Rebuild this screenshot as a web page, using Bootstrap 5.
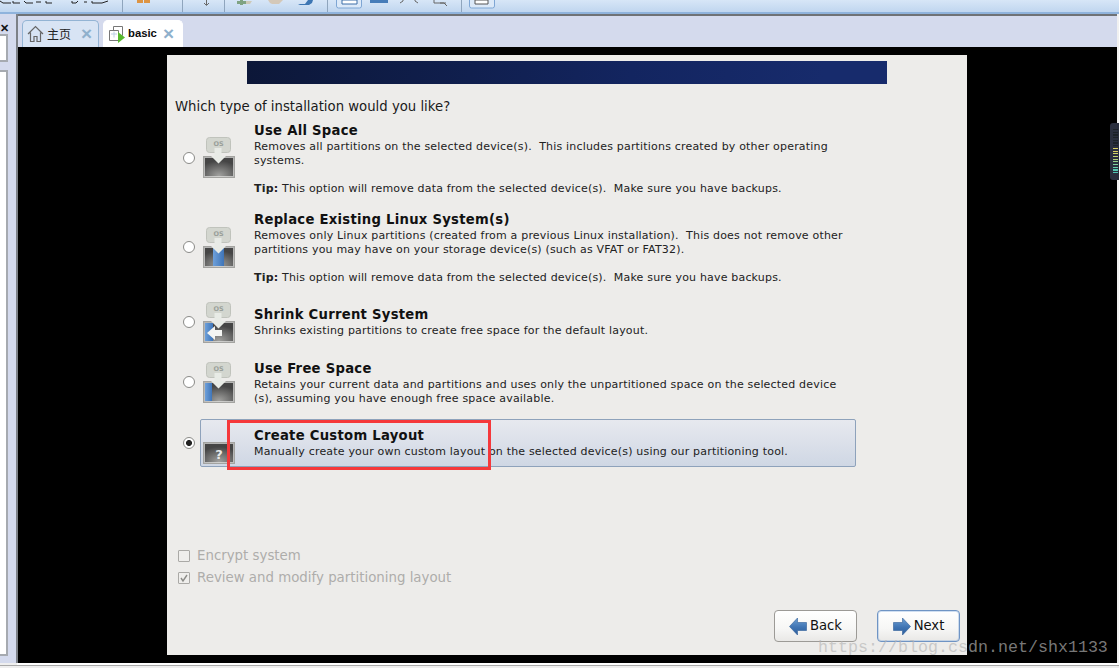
<!doctype html>
<html lang="en"><head><meta charset="utf-8"><title>Installer</title>
<link href="https://cdn.jsdelivr.net/npm/bootstrap@5.3.0/dist/css/bootstrap.min.css" rel="stylesheet">
<style>
body{width:1119px;height:668px;overflow:hidden;background:#efefef;font-family:"DejaVu Sans",sans-serif;position:relative}
.topbar{height:14px;background:linear-gradient(#d7e6f7,#c0d6ef);border-bottom:2px solid #8fb3dc;overflow:hidden}
.topbar svg{display:block}
.shell{height:649px}
.leftrail{width:18px;background:#d4daed;border-right:2px solid #7d8187;padding-top:3px}
.xmark{font:700 11px/14px "Liberation Sans",sans-serif;color:#111;height:18px;padding-top:4px;margin-bottom:-1px}
.railbox{background:#fff;border:2px solid #a6aab0;border-left:0;width:8px}
.rb1{height:28px}.rb2{height:586px;margin-top:8px}
.main{width:1101px;border-right:2px solid #f1f1f1}
.tabstrip{height:33px;background:#d4daed;border-top:2px solid #6f7275;padding:4px 0 0 4px;gap:4px}
.tabitem{height:27px;border:1px solid #93b4d4;border-bottom:0;border-radius:5px 5px 0 0;background:#d8e4f4;font:12px/25px "Noto Sans CJK SC",sans-serif;color:#222;padding-left:4px;gap:3px}
.tabitem.on{background:#fff;border-color:#fff;font:700 11.3px/25px "Liberation Sans",sans-serif;color:#0c0c0c}
.t1{width:77px}.t2{width:80px}
.tabx{color:#8fb0cc;font:700 19px/25px "Liberation Sans",sans-serif;width:11px;text-align:center}
.t1 .tabx{margin-right:6px!important}
.screen{height:616px;background:#000;padding:8px 0 0 149px}
.install{width:800px;height:600px;background:#edecea;color:#111;padding-top:6px}
.banner{width:640px;height:23px;margin-left:80px;background:linear-gradient(95deg,#0c1738,#101f4e 35%,#132560 60%,#172b6c 90%)}
.question{font-size:13.25px;line-height:17px;margin:14px 0 0 8px;color:#1a1a1a}
.optlist{margin-left:8px;width:681px}
.opt{position:relative;padding-left:79px;color:#111;padding-top:7px}
.otitle{font-weight:700;font-size:13.2px;line-height:17px;letter-spacing:.27px;margin-bottom:1px}
.odesc{font-size:11px;line-height:14px;letter-spacing:.185px;color:#222}
.odesc+.odesc{margin-top:14px}
.o1{height:89px}.o2{height:95px}.o3{height:54px}.o4{height:66px}
.o5{height:48px;margin-left:25px;padding-left:53px;width:656px;border:1px solid #8ea2bb;border-radius:2px;background:linear-gradient(#e7e9ef,#cfd7e4)}
.radioball{position:absolute;left:8px;width:12px;height:12px;border-radius:50%;background:#fff;border:1px solid #8b8b88}
.o1 .radioball{top:37px}.o2 .radioball{top:37px}.o3 .radioball{top:17px}.o4 .radioball{top:23px}
.o5 .radioball{left:-18px;top:17px;background:radial-gradient(circle,#222 0 2.6px,#fff 3.4px)}
.osico{position:absolute;left:28px;width:32px;height:41px}
.o1 .osico{top:22px}.o2 .osico{top:23px}.o3 .osico{top:3px}.o4 .osico{top:9px}
.o5 .osico{left:2px;top:3px}
.checks{margin:78px 0 0 11px;font-size:13.35px;line-height:22px;color:#aeadaa}
.cbox{width:12px;height:12px;border:1px solid #aaa9a6;background:#efeeec;border-radius:1px;margin-right:7px;flex:none}
.navbtns{margin:21px 7px 0 0;gap:20px}
.vbtn{width:83px;height:32px;border:1px solid #9c9a96;border-radius:4px;background:linear-gradient(#fff,#f6f6f5 60%,#e9e8e6);font-size:13.2px;line-height:30px;color:#111;gap:3px}
.vbtn.next{border-color:#6f94c4;box-shadow:inset 0 0 0 1px rgba(150,185,225,.45)}
.baseline{height:2px;background:#fff;margin-left:17px}
.baseline2{height:1px;background:#a9a9a9}
.hud{position:absolute;right:0;top:123px;width:9px;height:57px;background:#2a2f3e;border-radius:3px 0 0 3px;padding:6px 1px 0 3px}
.hud i{display:block;height:1.2px;margin-bottom:1.5px;background:#1c2228}
.wm{position:absolute;left:818px;top:638px;font:16.67px/20px "Liberation Mono",monospace;color:rgba(182,182,182,.67);white-space:nowrap}
.redbox{position:absolute;left:227px;top:420px;width:264px;height:50px;border:3px solid #f5383b}
</style></head><body>
<div class="topbar">
<svg width="520" height="12" viewBox="0 0 520 12">
<g fill="none" stroke="#222" stroke-width="1"><path d="M0 1l3 2h8M13 1v2h7M24 1l2 2h7M36 2h5M46 1v2h6"/><path d="M72 1v2h4l2-2M84 2h3M92 1v2h10l6-2"/></g>
<g stroke="#8fa5bd"><path d="M122.5 0v12M182.5 0v12M224.5 0v12M327.5 0v12M461.5 0v12"/></g>
<path d="M137 0h6v3h-6zM144 0h6v3h-6z" fill="#dd9443"/>
<path d="M206.5 0v5M204 3l2.5 2.500L209 3" fill="none" stroke="#6a6a6a"/>
<path d="M240 0h3v1h3v3h-3v1h-3V4h-3V1h3z" fill="#7fa383"/><path d="M246 1h6l-2 3h-4z" fill="#cdc9b8"/>
<path d="M268 0h15l-4 4h-7l-2-1z" fill="#d4c8b8"/>
<path d="M298 4h7l3-4h5l-1 3-3 2h-9z" fill="#3d76b3"/>
<rect x="336.500" y="-3" width="25" height="11" rx="2" fill="#dce9f8" stroke="#7ea6d4"/><path d="M342 0h15v4h-15z" fill="#fff" stroke="#3d6ea8"/>
<path d="M370 0h18v3h-18z" fill="#477db9"/>
<path d="M400 3l3-2M418 3l-3-2M404 0h-2M414 0h2" stroke="#666" fill="none"/>
<path d="M434 0v3h10l3 3M440 3h6" stroke="#666" fill="none"/>
<rect x="469.500" y="-3" width="25" height="11" rx="2" fill="#dce9f8" stroke="#7ea6d4"/><path d="M475 0h13v4h-13z" fill="#fff" stroke="#555"/>
</svg>
</div>
<div class="shell d-flex">
<div class="leftrail"><div class="xmark">✕</div><div class="railbox rb1"></div><div class="railbox rb2"></div></div>
<div class="main">
<div class="tabstrip d-flex align-items-start">
<div class="tabitem t1 d-flex"><svg width="17" height="18" viewBox="0 0 17 18" class="mt-1"><path d="M1 9l7.500-7.500L16 9M3.500 7.500v9h3.500v-5h3v5h3.500v-9" fill="none" stroke="#666" stroke-width="1.2"/></svg><span>主页</span><span class="tabx ms-auto me-2">×</span></div>
<div class="tabitem on t2 d-flex"><svg width="17" height="18" viewBox="0 0 17 18" class="mt-1"><path d="M5.500 5V1.500h9v9H12" fill="#fff" stroke="#777"/><path d="M1.500 5.500h9v10h-9z" fill="#fff" stroke="#777"/><path d="M3 9h6M6 6.500v6" stroke="#bcd0e4"/><path d="M10 7l7 5.500-7 5.500z" fill="#57b82e"/></svg><span>basic</span><span class="tabx ms-auto me-2">×</span></div>
</div>
<div class="screen"><div class="install">
<div class="banner"></div>
<div class="question">Which type of installation would you like?</div>
<div class="optlist">
<svg width="0" height="0" class="d-block"><defs>
<radialGradient id="dg" cx="50%" cy="90%" r="70%"><stop offset="0" stop-color="#a0a09e"/><stop offset="1" stop-color="#454545"/></radialGradient>
<linearGradient id="bg" x1="0" x2="1"><stop offset="0" stop-color="#6ea0da"/><stop offset="1" stop-color="#3f75b8"/></linearGradient>
<linearGradient id="ag" x1="0" y1="0" x2="0" y2="1"><stop offset="0" stop-color="#6d9fd4"/><stop offset=".55" stop-color="#3f74b3"/><stop offset="1" stop-color="#2d5d9b"/></linearGradient>
</defs></svg>
<div class="opt o1"><span class="radioball"></span>
<svg class="osico" viewBox="0 0 32 41"><rect x="3.500" y=".5" width="24" height="15" rx="3" fill="#d3d6cf" stroke="#c0c3bc"/><text x="15.500" y="9" font-size="6.500" font-weight="700" text-anchor="middle" fill="#9aa09a" font-family="DejaVu Sans">OS</text><rect x=".5" y="19.500" width="31" height="21" fill="url(#dg)" stroke="#a3a3a0"/><rect x="1.500" y="20.500" width="29" height="19" fill="none" stroke="#e6e6e4" stroke-opacity=".7"/><path d="M11.500 11h7v8h4.500l-7.500 7.500L8 19h3.500z" fill="#e8ebe6"/></svg>
<div class="otitle">Use All Space</div><div class="odesc">Removes all partitions on the selected device(s).&nbsp; This includes partitions created by other operating systems.</div><div class="odesc"><b>Tip:</b> This option will remove data from the selected device(s).&nbsp; Make sure you have backups.</div></div>
<div class="opt o2"><span class="radioball"></span>
<svg class="osico" viewBox="0 0 32 41"><rect x="3.500" y=".5" width="24" height="15" rx="3" fill="#d3d6cf" stroke="#c0c3bc"/><text x="15.500" y="9" font-size="6.500" font-weight="700" text-anchor="middle" fill="#9aa09a" font-family="DejaVu Sans">OS</text><rect x=".5" y="19.500" width="31" height="21" fill="url(#dg)" stroke="#a3a3a0"/><rect x="1.500" y="20.500" width="29" height="19" fill="none" stroke="#e6e6e4" stroke-opacity=".7"/><rect x="10" y="21" width="11" height="18" fill="url(#bg)"/><path d="M11.500 11h7v8h4.500l-7.500 7.500L8 19h3.500z" fill="#e8ebe6"/></svg>
<div class="otitle">Replace Existing Linux System(s)</div><div class="odesc">Removes only Linux partitions (created from a previous Linux installation).&nbsp; This does not remove other partitions you may have on your storage device(s) (such as VFAT or FAT32).</div><div class="odesc"><b>Tip:</b> This option will remove data from the selected device(s).&nbsp; Make sure you have backups.</div></div>
<div class="opt o3"><span class="radioball"></span>
<svg class="osico" viewBox="0 0 32 41"><rect x="3.500" y=".5" width="24" height="15" rx="3" fill="#d3d6cf" stroke="#c0c3bc"/><text x="15.500" y="9" font-size="6.500" font-weight="700" text-anchor="middle" fill="#9aa09a" font-family="DejaVu Sans">OS</text><rect x=".5" y="19.500" width="31" height="21" fill="url(#dg)" stroke="#a3a3a0"/><rect x="1.500" y="20.500" width="29" height="19" fill="none" stroke="#e6e6e4" stroke-opacity=".7"/><rect x="2" y="21" width="8" height="18" fill="url(#bg)"/><path d="M11.500 11h7v8h4.500l-7.500 7.500L8 19h3.500z" fill="#e8ebe6"/><path d="M4 31l8-7v4h7v6h-7v4z" fill="#f4f5f3"/></svg>
<div class="otitle">Shrink Current System</div><div class="odesc">Shrinks existing partitions to create free space for the default layout.</div></div>
<div class="opt o4"><span class="radioball"></span>
<svg class="osico" viewBox="0 0 32 41"><rect x="3.500" y=".5" width="24" height="15" rx="3" fill="#d3d6cf" stroke="#c0c3bc"/><text x="15.500" y="9" font-size="6.500" font-weight="700" text-anchor="middle" fill="#9aa09a" font-family="DejaVu Sans">OS</text><rect x=".5" y="19.500" width="31" height="21" fill="url(#dg)" stroke="#a3a3a0"/><rect x="1.500" y="20.500" width="29" height="19" fill="none" stroke="#e6e6e4" stroke-opacity=".7"/><rect x="2" y="21" width="7" height="18" fill="url(#bg)"/><path d="M11.500 11h7v8h4.500l-7.500 7.500L8 19h3.500z" fill="#e8ebe6"/></svg>
<div class="otitle">Use Free Space</div><div class="odesc">Retains your current data and partitions and uses only the unpartitioned space on the selected device (s), assuming you have enough free space available.</div></div>
<div class="opt o5"><span class="radioball"></span>
<svg class="osico" viewBox="0 0 32 41"><rect x=".5" y="19.500" width="31" height="21" fill="url(#dg)" stroke="#a3a3a0"/><rect x="1.500" y="20.500" width="29" height="19" fill="none" stroke="#e6e6e4" stroke-opacity=".7"/><text x="16" y="36" font-size="13" font-weight="700" text-anchor="middle" fill="#e8e8e8" font-family="DejaVu Sans">?</text></svg>
<div class="otitle">Create Custom Layout</div><div class="odesc">Manually create your own custom layout on the selected device(s) using our partitioning tool.</div></div>
</div>
<div class="checks">
<div class="d-flex align-items-center"><span class="cbox"></span>Encrypt system</div>
<div class="d-flex align-items-center"><span class="cbox d-flex"><svg width="10" height="10" viewBox="0 0 10 10"><path d="M2 5l2 3 4-6" fill="none" stroke="#8c8c88" stroke-width="1.400"/></svg></span>Review and modify partitioning layout</div>
</div>
<div class="navbtns d-flex justify-content-end">
<div class="vbtn d-flex justify-content-center align-items-center"><svg width="18" height="19" viewBox="0 0 18 19"><path d="M.5 9.500l8-8.500v4.500h9v8h-9V18z" fill="url(#ag)" stroke="#2f5e98" stroke-width=".6"/></svg>Back</div>
<div class="vbtn next d-flex justify-content-center align-items-center"><svg width="18" height="19" viewBox="0 0 18 19"><path d="M17.500 9.500l-8-8.500v4.500h-9v8h9V18z" fill="url(#ag)" stroke="#2f5e98" stroke-width=".6"/></svg>Next</div>
</div>
</div></div>
</div></div>
<div class="baseline"></div>
<div class="baseline2"></div>
<div class="hud"><i></i><i></i><i></i><i></i><i></i><i></i><i></i><i style="background:#d8cf60"></i><i style="background:#d8cf60"></i><i style="background:#cdd268"></i><i style="background:#c0d272"></i><i style="background:#aed27c"></i><i style="background:#96d28c"></i><i style="background:#7dd09c"></i><i style="background:#66cdaa"></i><i style="background:#55c8b0"></i><i style="background:#4fc4b4"></i></div>
<div class="redbox"></div>
<div class="wm">https://blog.csdn.net/shx1133</div>
<script src="https://cdn.jsdelivr.net/npm/bootstrap@5.3.0/dist/js/bootstrap.bundle.min.js"></script>
</body></html>
